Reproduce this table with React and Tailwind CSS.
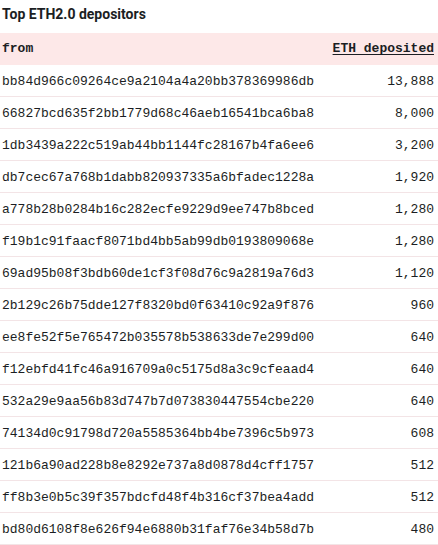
const rows = [
  ["bb84d966c09264ce9a2104a4a20bb378369986db", "13,888"],
  ["66827bcd635f2bb1779d68c46aeb16541bca6ba8", "8,000"],
  ["1db3439a222c519ab44bb1144fc28167b4fa6ee6", "3,200"],
  ["db7cec67a768b1dabb820937335a6bfadec1228a", "1,920"],
  ["a778b28b0284b16c282ecfe9229d9ee747b8bced", "1,280"],
  ["f19b1c91faacf8071bd4bb5ab99db0193809068e", "1,280"],
  ["69ad95b08f3bdb60de1cf3f08d76c9a2819a76d3", "1,120"],
  ["2b129c26b75dde127f8320bd0f63410c92a9f876", "960"],
  ["ee8fe52f5e765472b035578b538633de7e299d00", "640"],
  ["f12ebfd41fc46a916709a0c5175d8a3c9cfeaad4", "640"],
  ["532a29e9aa56b83d747b7d073830447554cbe220", "640"],
  ["74134d0c91798d720a5585364bb4be7396c5b973", "608"],
  ["121b6a90ad228b8e8292e737a8d0878d4cff1757", "512"],
  ["ff8b3e0b5c39f357bdcfd48f4b316cf37bea4add", "512"],
  ["bd80d6108f8e626f94e6880b31faf76e34b58d7b", "480"],
];

export default function App() {
  return (
    <div className="w-[438px] h-[545px] overflow-hidden bg-white text-[#1b1e23]">
      <div className="h-[33px] px-[2px] pt-[5px] text-[14px] font-bold leading-[18px] font-['Roboto','Noto_Sans',sans-serif]">
        Top ETH2.0 depositors
      </div>
      <div className="font-['Liberation_Mono',monospace] text-[13px]">
        <div className="h-[32px] bg-[#fde8e8] flex items-center justify-between pl-[2px] pr-[4px] font-bold">
          <span>from</span>
          <span className="underline underline-offset-2">ETH deposited</span>
        </div>
        {rows.map(([a, v]) => (
          <div key={a} className="h-[32px] pt-[2px] flex items-center justify-between pl-[2px] pr-[4px] border-b border-[#f3e4e6]">
            <span>{a}</span>
            <span>{v}</span>
          </div>
        ))}
      </div>
    </div>
  );
}
